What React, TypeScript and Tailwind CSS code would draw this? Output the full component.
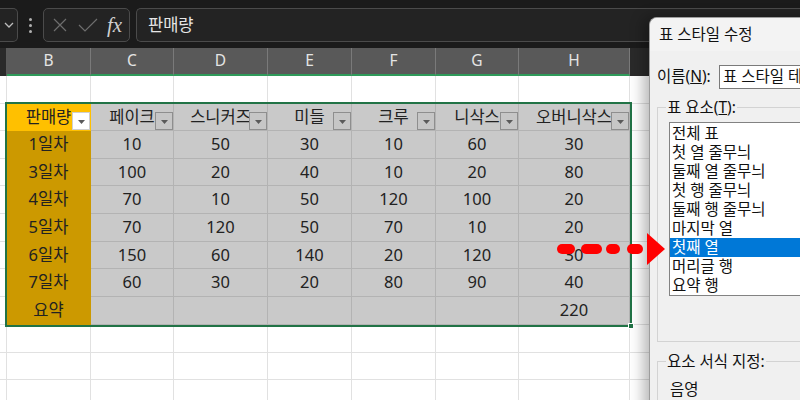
import React from 'react';

type Col = { letter: string; width: string };

const columns: Col[] = [
    { letter: 'B', width: 'w-[84px]' },
    { letter: 'C', width: 'w-[83px]' },
    { letter: 'D', width: 'w-[94px]' },
    { letter: 'E', width: 'w-[84px]' },
    { letter: 'F', width: 'w-[84px]' },
    { letter: 'G', width: 'w-[83px]' },
    { letter: 'H', width: 'w-[111px]' },
];

const headers = ['판매량', '페이크', '스니커즈', '미들', '크루', '니삭스', '오버니삭스'];

const rows: string[][] = [
    ['1일차', '10', '50', '30', '10', '60', '30'],
    ['3일차', '100', '20', '40', '10', '20', '80'],
    ['4일차', '70', '10', '50', '120', '100', '20'],
    ['5일차', '70', '120', '50', '70', '10', '20'],
    ['6일차', '150', '60', '140', '20', '120', '30'],
    ['7일차', '60', '30', '20', '80', '90', '40'],
    ['요약', '', '', '', '', '', '220'],
];

const tableHeights = ['h-[27px]', ...rows.map(() => 'h-[27.7px]')];

const styleItems = [
    '전체 표',
    '첫 열 줄무늬',
    '둘째 열 줄무늬',
    '첫 행 줄무늬',
    '둘째 행 줄무늬',
    '마지막 열',
    '첫째 열',
    '머리글 행',
    '요약 행',
];

function BlankRow({ height }: { height: string }) {
    return (
        <div className={`flex ${height}`}>
            <div className="w-[7px] shrink-0 border-b border-r border-[#e1e1e1]" />
            {columns.map((c) => (
                <div key={c.letter} className={`${c.width} shrink-0 border-b border-r border-[#e1e1e1]`} />
            ))}
            <div className="flex-1 border-b border-[#e1e1e1]" />
        </div>
    );
}

function FilterButton({ light }: { light?: boolean }) {
    return (
        <span
            className={`absolute bottom-0 right-0 flex h-[18px] w-[18px] items-center justify-center border ${
                light ? 'border-[#cfcfcf] bg-white' : 'border-[#8e8e8e] bg-[#c6c6c6]'
            }`}
        >
            <svg width="7" height="4" viewBox="0 0 7 4" className="mt-[2px]">
                <path d="M0 0h7L3.5 4z" fill="#5a5a5a" />
            </svg>
        </span>
    );
}

function FormulaBar() {
    return (
        <div className="flex h-[48px] items-start bg-[#1b1b1b] pt-[8px]">
            {/* Name box tail */}
            <div className="flex h-[34px] w-[18px] items-center justify-center rounded-r-[5px] border border-l-0 border-[#4b4b4b] bg-[#232323]">
                <svg width="10" height="6" viewBox="0 0 10 6">
                    <path d="M1 1l4 4 4-4" fill="none" stroke="#bdbdbd" strokeWidth="1.3" />
                </svg>
            </div>
            <div className="flex h-[34px] w-[25px] flex-col items-center justify-center gap-[3px]">
                <span className="h-[3px] w-[3px] rounded-full bg-[#b0b0b0]" />
                <span className="h-[3px] w-[3px] rounded-full bg-[#b0b0b0]" />
                <span className="h-[3px] w-[3px] rounded-full bg-[#b0b0b0]" />
            </div>
            {/* Cancel / Enter / fx */}
            <div className="flex h-[34px] w-[87px] items-center rounded-[5px] border border-[#4b4b4b] bg-[#232323] pl-[9px]">
                <svg width="14" height="14" viewBox="0 0 14 14">
                    <path d="M1 1l12 12M13 1L1 13" stroke="#6e6e6e" strokeWidth="1.2" />
                </svg>
                <svg width="20" height="14" viewBox="0 0 20 14" className="ml-[11px]">
                    <path d="M1 7l6 6L19 1" fill="none" stroke="#6e6e6e" strokeWidth="1.2" />
                </svg>
                <span className="ml-[9px] font-['Liberation_Serif',serif] text-[21px] italic leading-none text-[#cfcfcf]">
                    fx
                </span>
            </div>
            <div className="ml-[6px] flex h-[34px] flex-1 items-center rounded-l-[5px] border border-r-0 border-[#4b4b4b] bg-[#232323] pl-[11px] text-[16.5px] text-[#e6e6e6]">
                판매량
            </div>
        </div>
    );
}

function ColumnHeaders() {
    return (
        <div className="flex h-[28px] bg-[#2a2a2a]">
            <div className="w-[7px] shrink-0 border-r border-[#5a5a5a]" />
            {columns.map((c) => (
                <div
                    key={c.letter}
                    className={`${c.width} flex shrink-0 items-center justify-center border-b-2 border-r border-b-[#2f9a5a] border-r-[#7a7a7a] bg-[#595959] text-[15.5px] text-[#e4e4e4]`}
                >
                    {c.letter}
                </div>
            ))}
            <div className="flex-1" />
        </div>
    );
}

function StyleTable() {
    return (
        <div className="relative z-10 flex w-[623px] shrink-0 flex-col ring-2 ring-[#217346]">
            {/* Header row */}
            <div className="flex h-[27px]">
                {headers.map((h, i) => (
                    <div
                        key={h}
                        className={`${columns[i].width} relative flex shrink-0 items-center justify-center overflow-hidden border-b border-r ${
                            i === 0 ? 'border-[#ffc000] bg-[#ffc000]' : 'border-[#b3b3b3] bg-[#c9c9c9]'
                        }`}
                    >
                        <span className="whitespace-nowrap">{h}</span>
                        <FilterButton light={i === 0} />
                    </div>
                ))}
            </div>
            {rows.map((r) => (
                <div key={r[0]} className="flex h-[27.7px]">
                    {r.map((v, i) => (
                        <div
                            key={i}
                            className={`${columns[i].width} flex shrink-0 items-center justify-center border-b border-r ${
                                i === 0 ? 'border-[#cc9900] bg-[#cc9900]' : 'border-[#b3b3b3] bg-[#c9c9c9]'
                            }`}
                        >
                            {v}
                        </div>
                    ))}
                </div>
            ))}
            {/* Resize handle */}
            <span className="absolute -bottom-[4px] -right-[4px] h-[6px] w-[6px] border border-white bg-[#217346]" />
        </div>
    );
}

function Grid() {
    return (
        <div className="flex flex-col bg-white text-[16.5px] text-[#222]">
            <BlankRow height="h-[28px]" />
            <div className="flex">
                <div className="flex w-[7px] shrink-0 flex-col">
                    {tableHeights.map((h, i) => (
                        <div key={i} className={`${h} border-b border-r border-[#e1e1e1]`} />
                    ))}
                </div>
                <StyleTable />
                <div className="flex flex-1 flex-col">
                    {tableHeights.map((h, i) => (
                        <div key={i} className={`${h} border-b border-[#e1e1e1]`} />
                    ))}
                </div>
            </div>
            <BlankRow height="h-[27.7px]" />
            <BlankRow height="h-[27.7px]" />
            <BlankRow height="h-[27.7px]" />
        </div>
    );
}

function StyleDialog() {
    return (
        <div className="absolute left-[649px] top-[17px] z-20 h-[400px] w-[170px] overflow-hidden rounded-tl-[8px] border-l border-t border-[#9d9d9d] bg-[#f0f0f0] text-[15.5px] text-[#111] shadow-[-6px_0_14px_rgba(0,0,0,0.28)]">
            <div className="flex h-[33px] items-center bg-[#f3f3f3] pl-[9px]">표 스타일 수정</div>
            <div className="mt-[14px] flex h-[24px] items-center">
                <span className="w-[69px] shrink-0 pl-[7px] whitespace-nowrap">
                    이름(<span className="underline">N</span>):
                </span>
                <div className="flex h-[24px] w-[120px] shrink-0 items-center border border-[#7a7a7a] bg-white pl-[3px] whitespace-nowrap">
                    표 스타일 테이블 1
                </div>
            </div>
            <fieldset className="ml-[7px] mt-[8px] w-[200px] border border-[#d3d3d3] pb-[45px] pl-[8px]">
                <legend className="px-[1px] leading-[20px]">
                    표 요소(<span className="underline">T</span>):
                </legend>
                <div className="ml-[3px] mt-[5px] h-[174px] border border-[#828282] bg-white py-[1px]">
                    {styleItems.map((item) => (
                        <div
                            key={item}
                            className={`h-[19px] pl-[2px] leading-[19px] whitespace-nowrap ${
                                item === '첫째 열' ? 'bg-[#0078d7] text-white' : ''
                            }`}
                        >
                            {item}
                        </div>
                    ))}
                </div>
            </fieldset>
            <fieldset className="ml-[7px] mt-[9px] w-[200px] border border-[#d3d3d3] pb-[40px] pl-[8px]">
                <legend className="px-[1px] leading-[20px]">요소 서식 지정:</legend>
                <div className="ml-[4px] mt-[8px] leading-[20px]">음영</div>
            </fieldset>
        </div>
    );
}

function DashedArrow() {
    return (
        <svg className="absolute left-[550px] top-[228px] z-30" width="120" height="40" viewBox="0 0 120 40">
            <g stroke="#ff0000" strokeWidth="10" strokeLinecap="round">
                <line x1="12" y1="21" x2="20" y2="21" />
                <line x1="36" y1="21" x2="47" y2="21" />
                <line x1="61" y1="21" x2="65" y2="21" />
                <line x1="82" y1="21" x2="88" y2="21" />
            </g>
            <polygon points="97,5 97,37 115,21" fill="#ff0000" />
        </svg>
    );
}

export default function App() {
    return (
        <div className="relative h-[400px] w-[800px] overflow-hidden bg-white font-['Noto_Sans','Noto_Sans_CJK_KR',sans-serif]">
            <FormulaBar />
            <ColumnHeaders />
            <Grid />
            <StyleDialog />
            <DashedArrow />
        </div>
    );
}
